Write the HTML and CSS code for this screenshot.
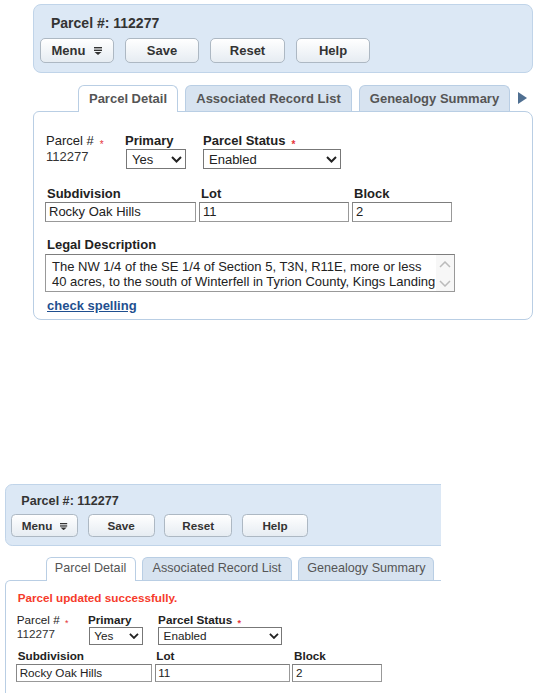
FILE: index.html
```html
<!DOCTYPE html>
<html lang="en">
<head>
    <meta charset="UTF-8">
    <meta name="viewport" content="width=device-width, initial-scale=1.0">
    <title>Parcel 112277</title>
    <link rel="stylesheet" href="styles.css">
</head>
<body>
    <!-- before save -->
    <div class="shot">
        <div class="header">
            <h1>Parcel #: 112277</h1>
            <div class="toolbar">
                <button class="btn">Menu
                    <svg class="menu-icon" width="8" height="8" viewBox="0 0 8 8"><rect x="0" y="0" width="8" height="1.4"/><rect x="0" y="2.6" width="8" height="1.4"/><polygon points="0.5,5 7.5,5 4,8"/></svg>
                </button>
                <button class="btn">Save</button>
                <button class="btn btn-wide">Reset</button>
                <button class="btn">Help</button>
            </div>
        </div>

        <div class="tabs">
            <div class="tab tab-detail active">Parcel Detail</div>
            <div class="tab tab-records">Associated Record List</div>
            <div class="tab tab-genealogy">Genealogy Summary</div>
            <svg class="tab-next" width="9" height="12" viewBox="0 0 9 12"><polygon points="0,0 9,6 0,12"/></svg>
        </div>

        <div class="panel">
            <div class="row">
                <div class="field field-parcel">
                    <div class="label label-plain">Parcel #<span class="req">*</span></div>
                    <div class="value">112277</div>
                </div>
                <div class="field field-primary">
                    <div class="label">Primary</div>
                    <div class="select select-primary"><span>Yes</span>
                        <svg width="11" height="7" viewBox="0 0 11 7"><polyline points="1,1 5.5,5.5 10,1"/></svg>
                    </div>
                </div>
                <div class="field">
                    <div class="label">Parcel Status<span class="req">*</span></div>
                    <div class="select select-status"><span>Enabled</span>
                        <svg width="11" height="7" viewBox="0 0 11 7"><polyline points="1,1 5.5,5.5 10,1"/></svg>
                    </div>
                </div>
            </div>

            <div class="row row-inputs">
                <div class="field">
                    <div class="label">Subdivision</div>
                    <div class="input input-subdivision">Rocky Oak Hills</div>
                </div>
                <div class="field">
                    <div class="label">Lot</div>
                    <div class="input input-lot">11</div>
                </div>
                <div class="field">
                    <div class="label">Block</div>
                    <div class="input input-block">2</div>
                </div>
            </div>

            <div class="row row-legal">
                <div class="field">
                    <div class="label">Legal Description</div>
                    <div class="textarea">
                        <div class="textarea-text">The NW 1/4 of the SE 1/4 of Section 5, T3N, R11E, more or less 40 acres, to the south of Winterfell in Tyrion County, Kings Landing</div>
                        <div class="scroll">
                            <svg width="12" height="7" viewBox="0 0 12 7"><polyline points="1,6 6,1 11,6"/></svg>
                            <svg width="12" height="7" viewBox="0 0 12 7"><polyline points="1,1 6,6 11,1"/></svg>
                        </div>
                    </div>
                    <a class="spell" href="#">check spelling</a>
                </div>
            </div>
        </div>
    </div>

    <!-- after save -->
    <div class="shot shot-small">
        <div class="header">
            <h1>Parcel #: 112277</h1>
            <div class="toolbar">
                <button class="btn">Menu
                    <svg class="menu-icon" width="8" height="8" viewBox="0 0 8 8"><rect x="0" y="0" width="8" height="1.4"/><rect x="0" y="2.6" width="8" height="1.4"/><polygon points="0.5,5 7.5,5 4,8"/></svg>
                </button>
                <button class="btn">Save</button>
                <button class="btn btn-wide">Reset</button>
                <button class="btn">Help</button>
            </div>
        </div>

        <div class="tabs">
            <div class="tab tab-detail active">Parcel Detail</div>
            <div class="tab tab-records">Associated Record List</div>
            <div class="tab tab-genealogy">Genealogy Summary</div>
        </div>

        <div class="panel">
            <div class="notice">Parcel updated successfully.</div>
            <div class="row">
                <div class="field field-parcel">
                    <div class="label label-plain">Parcel #<span class="req">*</span></div>
                    <div class="value">112277</div>
                </div>
                <div class="field field-primary">
                    <div class="label">Primary</div>
                    <div class="select select-primary"><span>Yes</span>
                        <svg width="11" height="7" viewBox="0 0 11 7"><polyline points="1,1 5.5,5.5 10,1"/></svg>
                    </div>
                </div>
                <div class="field">
                    <div class="label">Parcel Status<span class="req">*</span></div>
                    <div class="select select-status"><span>Enabled</span>
                        <svg width="11" height="7" viewBox="0 0 11 7"><polyline points="1,1 5.5,5.5 10,1"/></svg>
                    </div>
                </div>
            </div>

            <div class="row row-inputs">
                <div class="field">
                    <div class="label">Subdivision</div>
                    <div class="input input-subdivision">Rocky Oak Hills</div>
                </div>
                <div class="field">
                    <div class="label">Lot</div>
                    <div class="input input-lot">11</div>
                </div>
                <div class="field">
                    <div class="label">Block</div>
                    <div class="input input-block">2</div>
                </div>
            </div>
        </div>
    </div>
</body>
</html>
```

FILE: styles.css
```css
body {
    margin: 0;
    padding-top: 4px;
    font-family: "Liberation Sans", Arial, sans-serif;
    font-size: 13px;
    color: #333;
    background: #fff;
}

.shot {
    width: 500px;
    margin-left: 33px;
}
/* second screenshot is a bit smaller and cut off on the right */
.shot-small {
    zoom: 0.9;
    width: 484px;
    margin: 182px 0 0 5.6px;
    overflow: hidden;
}

/* header bar */
.header {
    box-sizing: border-box;
    width: 500px;
    height: 69px;
    padding: 10px 6px 0;
    background: #dce8f5;
    border: 1px solid #c0d4e9;
    border-radius: 8px;
}
.header h1 {
    margin: 0 0 6px 11px;
    font-size: 14px;
    line-height: 17px;
    color: #333;
}
.toolbar {
    display: flex;
    gap: 11px;
}
.btn {
    box-sizing: border-box;
    width: 74px;
    height: 25px;
    display: flex;
    align-items: center;
    justify-content: center;
    gap: 9px;
    padding: 0;
    border: 1px solid #adb8c3;
    border-radius: 5px;
    background: linear-gradient(#ffffff, #e6ecf2);
    font: bold 13px "Liberation Sans", Arial, sans-serif;
    color: #333;
}
.btn-wide { width: 75px; }
.menu-icon { fill: #333; margin-top: 1px; }

/* tabs */
.tabs {
    display: flex;
    align-items: flex-end;
    gap: 7px;
    height: 26px;
    margin-top: 12px;
    padding-left: 45px;
}
.tab {
    box-sizing: border-box;
    height: 26px;
    padding-top: 5px;
    text-align: center;
    font-weight: bold;
    line-height: 15px;
    color: #555;
    background: #d7e3f0;
    border: 1px solid #b9cee4;
    border-bottom: none;
    border-radius: 6px 6px 0 0;
    white-space: nowrap;
}
.tab.active {
    position: relative;
    z-index: 1;
    height: 27px;
    margin-bottom: -1px;
    background: #fff;
}
.tab-detail { width: 100px; }
.tab-records { width: 167px; }
.tab-genealogy { width: 151px; }
.tab-next {
    align-self: center;
    margin-left: 1px;
    fill: #4f6f91;
}

/* tab content */
.panel {
    box-sizing: border-box;
    width: 500px;
    padding: 21px 12px 6px;
    background: #fff;
    border: 1px solid #b9cee4;
    border-radius: 6px 8px 8px 8px;
}
.row { display: flex; }
.row-inputs {
    gap: 3px;
    margin: 17px 0 0 -1px;
}
.row-legal {
    margin: 15px 0 0 -1px;
}
.field-parcel { width: 79px; }
.field-primary { width: 78px; }

.label {
    margin-bottom: 1px;
    font-weight: bold;
    line-height: 15px;
    color: #222;
}
.row-inputs .label,
.row-legal .label { padding-left: 2px; }
.label-plain { font-weight: normal; }
.req {
    position: relative;
    top: 3px;
    margin-left: 6px;
    font-size: 10px;
    line-height: 10px;
    color: #e5333a;
}
.value { line-height: 15px; }

.select {
    box-sizing: border-box;
    height: 20px;
    display: flex;
    align-items: center;
    justify-content: space-between;
    padding: 0 3px 0 5px;
    border: 1px solid #777;
    background: #fff;
    color: #222;
}
.select svg {
    fill: none;
    stroke: #222;
    stroke-width: 2;
}
.select-primary { width: 60px; margin-left: 1px; }
.select-status { width: 138px; }

.input {
    box-sizing: border-box;
    height: 20px;
    padding: 0 3px;
    line-height: 18px;
    border: 1px solid #999;
    border-top-color: #7d7d7d;
    border-left-color: #888;
    color: #222;
}
.input-subdivision { width: 151px; }
.input-lot { width: 150px; }
.input-block { width: 100px; }

.textarea {
    box-sizing: border-box;
    width: 410px;
    height: 38px;
    margin-top: 2px;
    display: flex;
    border: 1px solid #999;
    border-top-color: #7d7d7d;
}
.textarea-text {
    flex: 1;
    padding: 4px 0 0 6px;
    line-height: 15px;
    color: #222;
}
.scroll {
    width: 18px;
    display: flex;
    flex-direction: column;
    justify-content: space-between;
    align-items: center;
    padding: 6px 0 4px;
    background: #f7f7f7;
}
.scroll svg {
    fill: none;
    stroke: #bbb;
    stroke-width: 1.5;
}

.spell {
    display: inline-block;
    margin: 6px 0 0 2px;
    font-weight: bold;
    line-height: 15px;
    color: #1f4f8f;
}

/* after save */
.notice {
    margin: -10px 0 9px 1px;
    font-weight: bold;
    line-height: 15px;
    color: #f63b2b;
}
.shot-small .tab {
    font-weight: normal;
    font-size: 14px;
}
.shot-small .row-inputs { margin-top: 5px; }
.shot-small .panel {
    padding-bottom: 14px;
    border-bottom: none;
    border-radius: 6px 0 0 0;
}
```
